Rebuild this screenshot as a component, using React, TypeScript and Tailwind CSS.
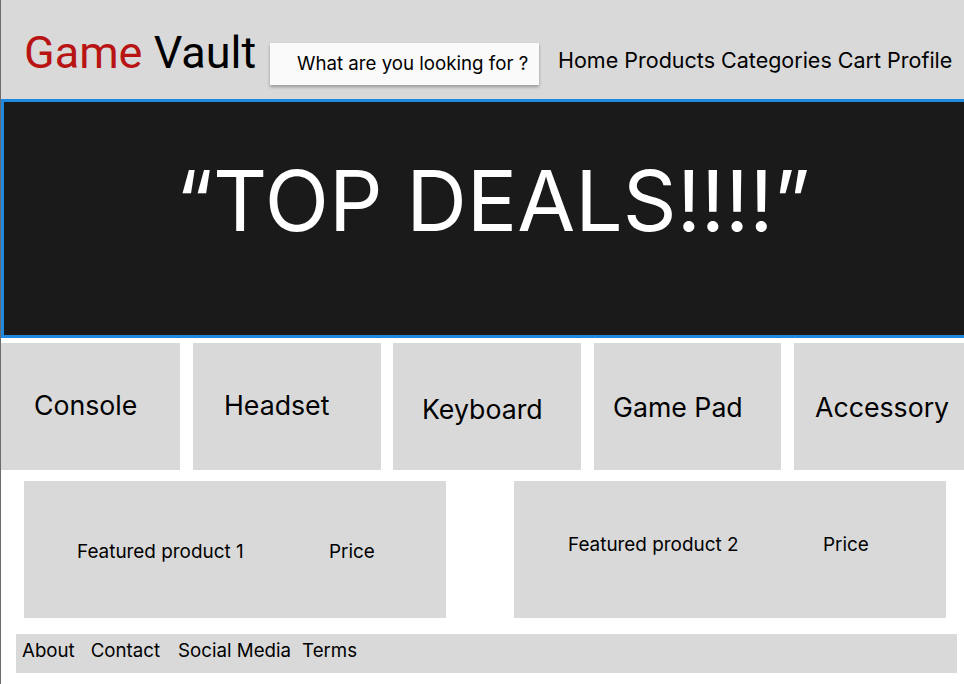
export default function App() {
  const categories = [
    { name: 'Console', w: 'w-[179px]', ml: 'ml-0', pad: 'pl-[33px] pt-[49px]' },
    { name: 'Headset', w: 'w-[188px]', ml: 'ml-[13px]', pad: 'pl-[31px] pt-[49px]' },
    { name: 'Keyboard', w: 'w-[188px]', ml: 'ml-[12px]', pad: 'pl-[29px] pt-[53px]' },
    { name: 'Game Pad', w: 'w-[187px]', ml: 'ml-[13px]', pad: 'pl-[19px] pt-[51px]' },
    { name: 'Accessory', w: 'flex-1', ml: 'ml-[13px]', pad: 'pl-[21px] pt-[51px]' },
  ];

  return (
    <div className="min-h-screen w-[964px] bg-white border-l border-[#6b6b6b] font-['Inter',sans-serif] text-black overflow-hidden">
      {/* header */}
      <header className="h-[99px] bg-[#d9d9d9] flex items-start">
        <div className="w-[269px] pl-[23px] pt-[30px] font-['Roboto',sans-serif] text-[45px] leading-none whitespace-nowrap">
          <span className="text-[#b81414]">Game</span> Vault
        </div>
        <div className="mt-[43px] w-[269px] h-[42px] bg-[#fafafa] shadow-[0_2px_3px_rgba(0,0,0,0.3)] flex items-center pl-[27px] text-[18.7px] leading-none whitespace-nowrap">
          What are you looking for ?
        </div>
        <nav className="ml-[19px] mt-[50px] text-[21.5px] leading-none whitespace-nowrap">
          Home Products Categories Cart Profile
        </nav>
      </header>

      {/* hero */}
      <section className="h-[239px] bg-[#1a1a1a] border-t-[3px] border-b-[3px] border-l-[3px] border-[#1f88df] pl-[172px] pt-[57px]">
        <h1 className="text-white text-[84px] leading-none whitespace-nowrap">“TOP DEALS!!!!”</h1>
      </section>

      {/* categories */}
      <div className="mt-[5px] h-[127px] flex">
        {categories.map((c) => (
          <div key={c.name} className={`${c.w} ${c.ml} ${c.pad} bg-[#d9d9d9] text-[26.7px] leading-none whitespace-nowrap`}>
            {c.name}
          </div>
        ))}
      </div>

      {/* featured */}
      <div className="mt-[11px] flex text-[18.9px] leading-none whitespace-nowrap">
        <div className="ml-[23px] w-[422px] h-[137px] bg-[#d9d9d9] flex items-start pl-[53px] pt-[62px]">
          <span className="w-[252px]">Featured product 1</span>
          <span>Price</span>
        </div>
        <div className="ml-[68px] w-[432px] h-[137px] bg-[#d9d9d9] flex items-start pl-[54px] pt-[55px]">
          <span className="w-[255px]">Featured product 2</span>
          <span>Price</span>
        </div>
      </div>

      {/* footer */}
      <footer className="mt-[16px] ml-[15px] w-[941px] h-[39px] bg-[#d9d9d9] flex items-start pl-[6px] pt-[8px] text-[18.7px] leading-none whitespace-nowrap">
        <span>About</span>
        <span className="ml-[16px]">Contact</span>
        <span className="ml-[18px]">Social Media</span>
        <span className="ml-[11px]">Terms</span>
      </footer>
    </div>
  );
}
